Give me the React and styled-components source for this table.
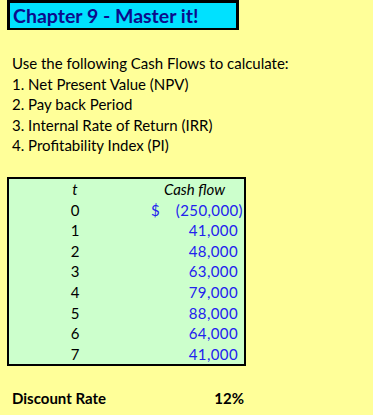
import React from 'react';
import styled, { createGlobalStyle } from 'styled-components';

const GlobalStyle = createGlobalStyle`
  html, body {
    margin: 0;
    padding: 0;
    background: #ffff99;
  }
  body {
    font-family: Lato, "Open Sans", sans-serif;
    font-size: 15px;
    color: #000;
  }
`;

const Sheet = styled.div`
  width: 373px;
  height: 415px;
  padding-left: 7px;
  box-sizing: border-box;
  overflow: hidden;
`;

const TitleBox = styled.div`
  width: 232px;
  height: 30px;
  box-sizing: border-box;
  border: 3px solid #000;
  border-bottom-width: 2px;
  background: #00e1ff;
  color: #0c0c8c;
  font-weight: 700;
  font-size: 19.5px;
  line-height: 25px;
  padding-left: 3px;
  white-space: nowrap;
`;

const Instructions = styled.div`
  margin-top: 23px;
  padding-left: 5px;
  line-height: 20.6px;
`;

const Table = styled.div`
  margin-top: 21px;
  width: 239px;
  box-sizing: border-box;
  border: 2px solid #000;
  background: #ccffcc;
  display: grid;
  grid-template-columns: 136px 1fr;
  grid-auto-rows: 20.6px;
  line-height: 20.6px;
`;

const TCell = styled.div`
  text-align: center;
  padding-right: 4px;
  font-style: ${p => (p.$head ? 'italic' : 'normal')};
`;

const FlowHead = styled.div`
  text-align: center;
  font-style: italic;
`;

const FlowCell = styled.div`
  display: flex;
  justify-content: space-between;
  color: #2222ee;
  letter-spacing: 0.4px;
  padding-left: 6px;
  padding-right: ${p => (p.$neg ? '1px' : '6px')};
`;

const RateRow = styled.div`
  margin-top: 22px;
  width: 239px;
  display: flex;
  justify-content: space-between;
  padding-left: 5px;
  padding-right: 2px;
  box-sizing: border-box;
  font-weight: 700;
  line-height: 20.6px;
`;

const flows = [
  { t: 0, v: '(250,000)', neg: true, cur: true },
  { t: 1, v: '41,000' },
  { t: 2, v: '48,000' },
  { t: 3, v: '63,000' },
  { t: 4, v: '79,000' },
  { t: 5, v: '88,000' },
  { t: 6, v: '64,000' },
  { t: 7, v: '41,000' },
];

export default function App() {
  return (
    <>
      <GlobalStyle />
      <Sheet>
        <TitleBox>Chapter 9 - Master it!</TitleBox>
        <Instructions>
          <div>Use the following Cash Flows to calculate:</div>
          <div>1. Net Present Value (NPV)</div>
          <div>2. Pay back Period</div>
          <div>3. Internal Rate of Return (IRR)</div>
          <div>4. Profitability Index (PI)</div>
        </Instructions>
        <Table>
          <TCell $head>t</TCell>
          <FlowHead>Cash flow</FlowHead>
          {flows.map(f => (
            <React.Fragment key={f.t}>
              <TCell>{f.t}</TCell>
              <FlowCell $neg={f.neg}>
                <span>{f.cur ? '$' : ''}</span>
                <span>{f.v}</span>
              </FlowCell>
            </React.Fragment>
          ))}
        </Table>
        <RateRow>
          <span>Discount Rate</span>
          <span>12%</span>
        </RateRow>
      </Sheet>
    </>
  );
}
